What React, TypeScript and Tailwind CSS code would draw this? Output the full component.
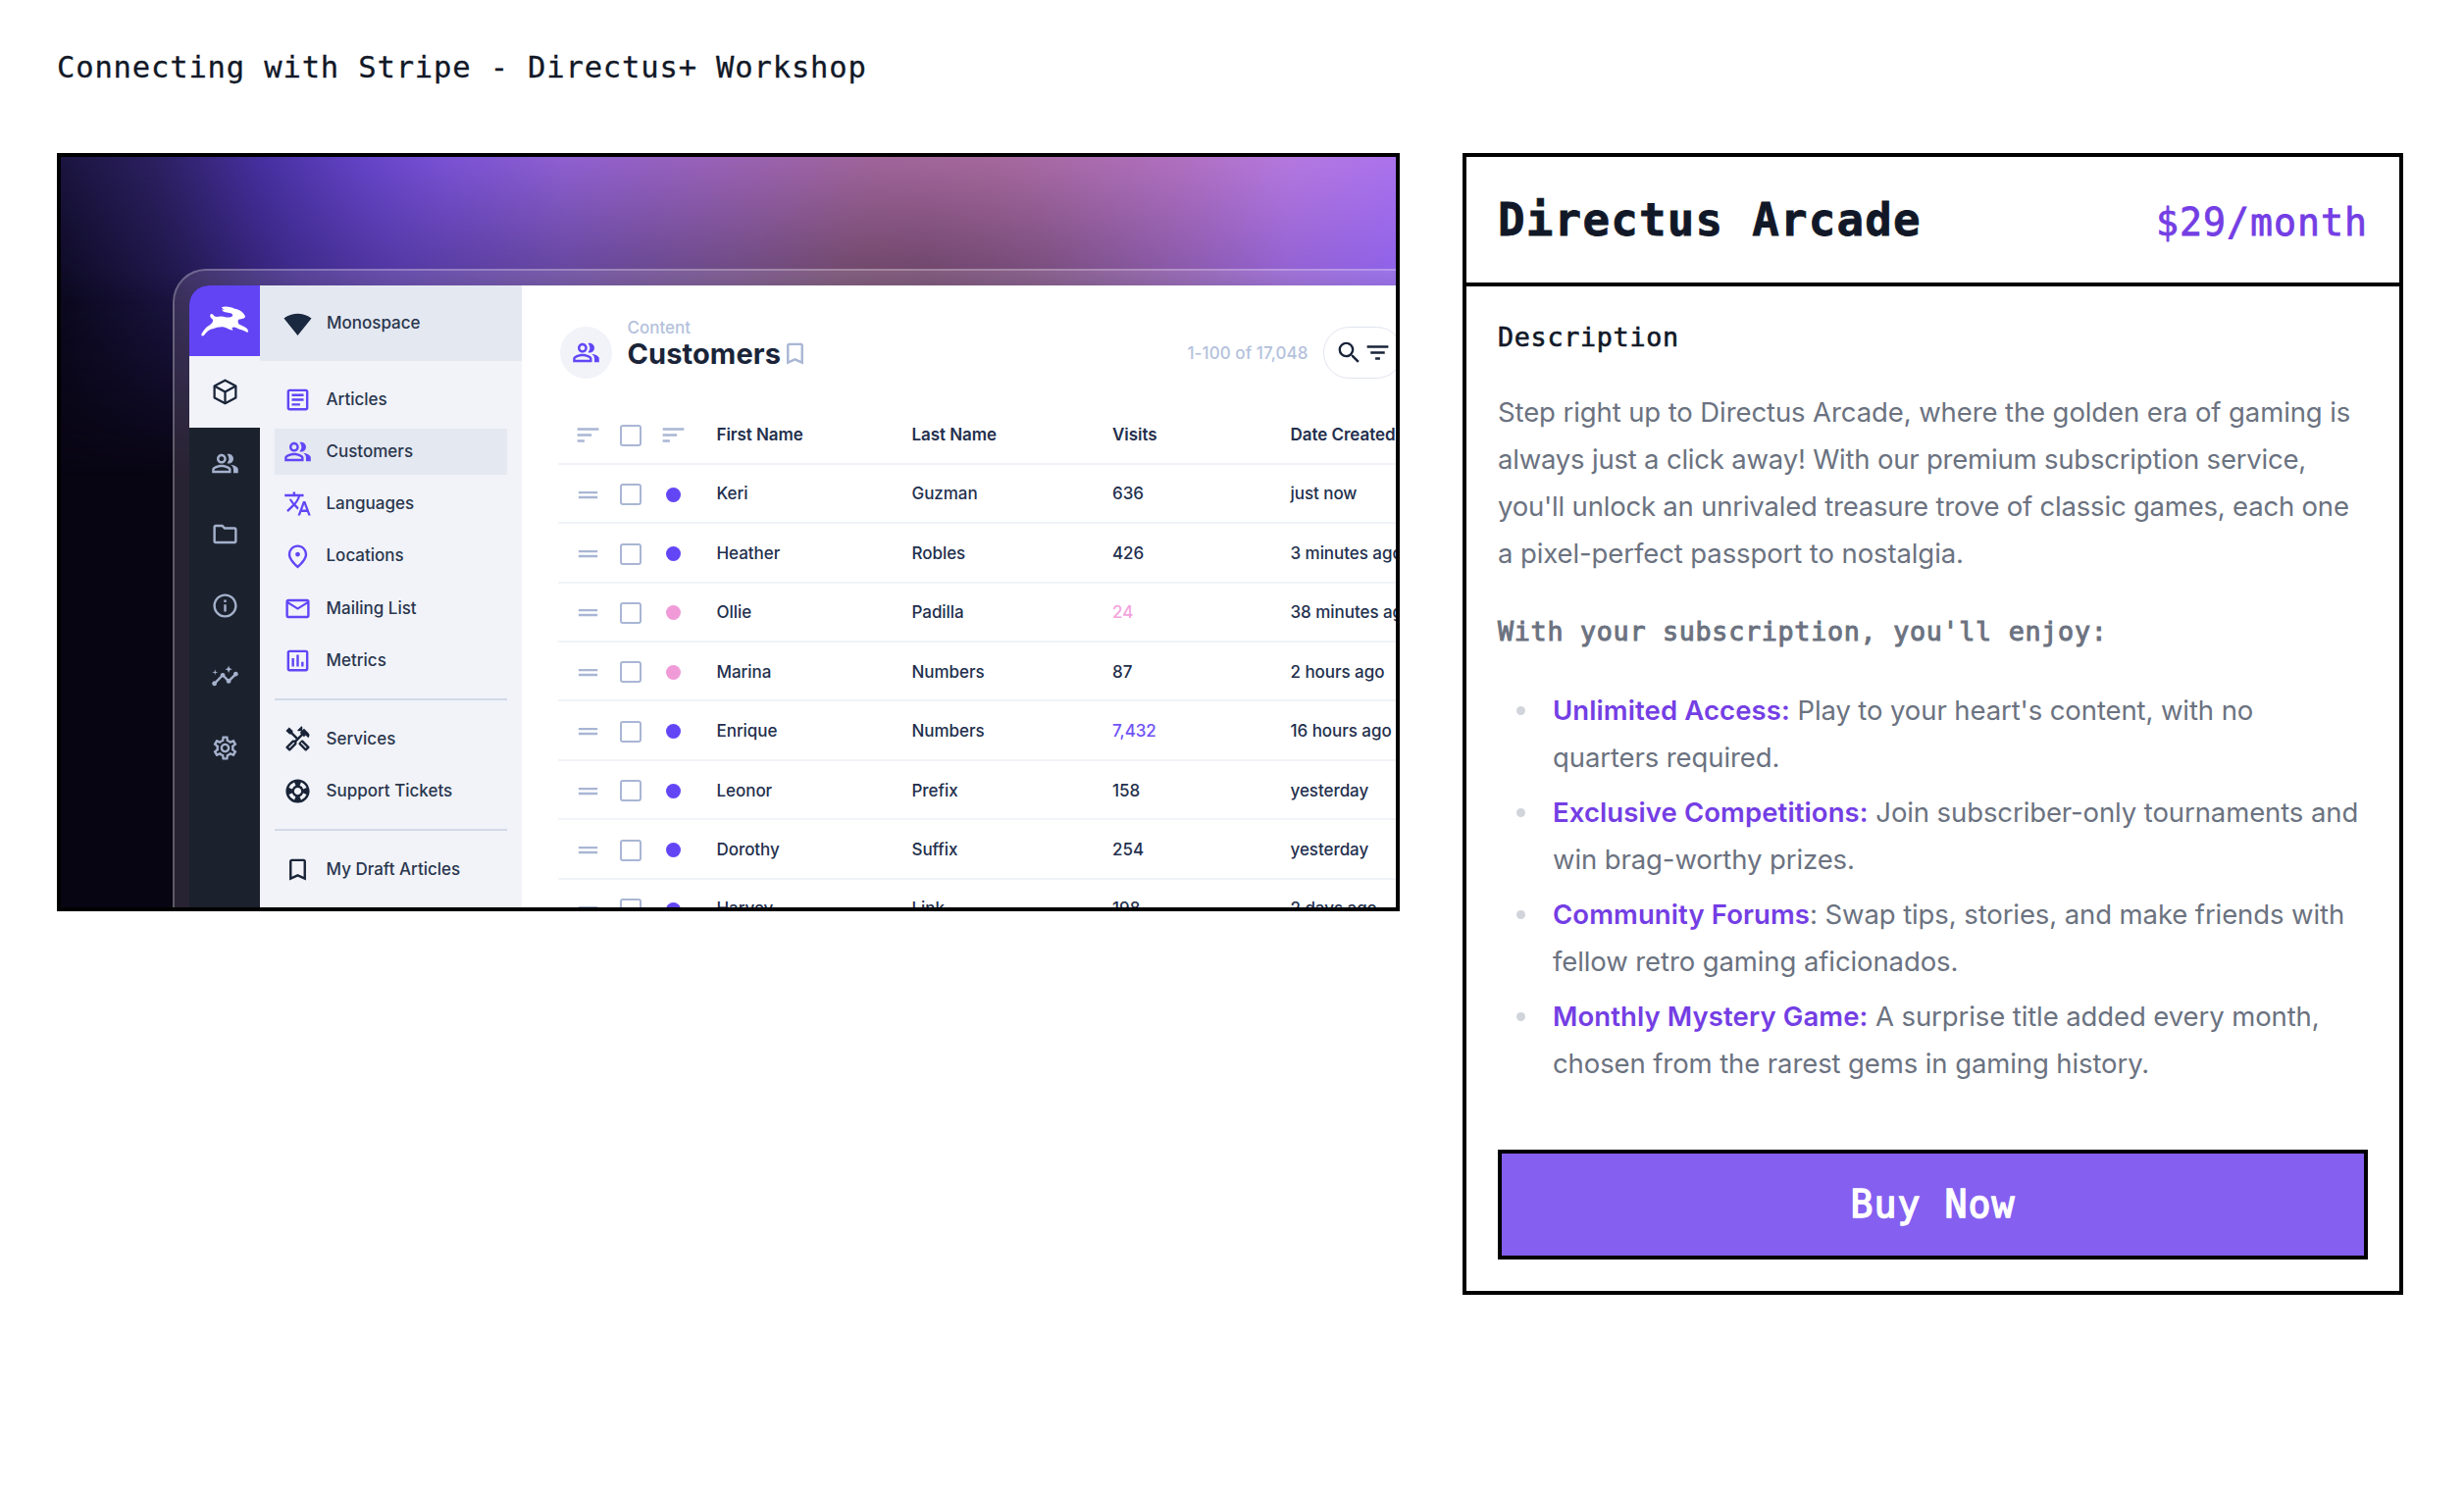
import type { ReactNode } from "react";
import type { IconType } from "react-icons";
import {
  MdBookmarkBorder,
  MdDragHandle,
  MdFilterList,
  MdInfoOutline,
  MdInsights,
  MdMailOutline,
  MdOutlineArticle,
  MdOutlineFolder,
  MdOutlineHandyman,
  MdOutlineInsertChart,
  MdOutlinePeopleAlt,
  MdOutlinePlace,
  MdOutlineSettings,
  MdOutlineSupport,
  MdSearch,
  MdSignalWifi4Bar,
  MdSort,
  MdTranslate,
} from "react-icons/md";

function RabbitLogo() {
  return (
    <svg viewBox="-6 -13.5 219 219" className="size-[73px]" fill="#fff">
      <path d="M31 136 C36 126 44 114 56 108 C64 103 67 97 66 91 C61 88 56 82 58 76 C61 71 67 73 69 79 C74 85 82 81 92 81 C104 82 116 88 125 81 C129 77 126 73 120 71 C110 69 98 70 93 60 L103 61 C98 59 94 56 93 53 C106 49 124 53 132 58 C148 60 162 70 165 82 C164 88 154 90 146 90 C142 92 142 98 145 104 C154 110 168 112 173 122 C175 128 173 132 169 129 C160 122 148 122 138 116 C132 112 127 114 124 117 L128 123 C118 124 110 116 100 114 C88 112 76 116 66 119 C54 120 46 130 40 138 C36 143 30 142 31 136 Z" />
    </svg>
  );
}

function CubeIcon() {
  return (
    <svg
      viewBox="0 0 24 24"
      className="size-[29px]"
      fill="none"
      stroke="currentColor"
      strokeWidth="1.9"
      strokeLinejoin="round"
    >
      <path d="M12 2.3 21 7v10l-9 4.7L3 17V7z" />
      <path d="m3 7 9 5 9-5M12 12v9.7" />
    </svg>
  );
}

const modules: IconType[] = [
  MdOutlinePeopleAlt,
  MdOutlineFolder,
  MdInfoOutline,
  MdInsights,
  MdOutlineSettings,
];

function ModuleBar() {
  return (
    <div className="flex w-[72px] shrink-0 flex-col bg-[#1b222d] text-[#a5b1cc]">
      <div className="h-[72.5px] bg-[#6244f5]">
        <RabbitLogo />
      </div>
      <div className="flex h-[72.5px] items-center justify-center bg-[#f1f3f9] pt-px text-[#1a2438]">
        <CubeIcon />
      </div>
      {modules.map((Icon, i) => (
        <div key={i} className="flex h-[72.5px] items-center justify-center pt-px">
          <Icon className="size-[29px]" />
        </div>
      ))}
    </div>
  );
}

function NavItem({
  icon: Icon,
  label,
  active = false,
  dark = false,
}: {
  icon: IconType;
  label: string;
  active?: boolean;
  dark?: boolean;
}) {
  return (
    <div
      className={`flex h-[47.5px] items-center gap-[15px] pl-[8.5px] ${active ? "bg-[#e4e8f1]" : ""}`}
    >
      <Icon className={`size-[29px] shrink-0 ${dark ? "text-[#1a2438]" : "text-[#6246f6]"}`} />
      <span>{label}</span>
    </div>
  );
}

function NavDivider() {
  return <div className="mt-[9px] mb-[10px] h-[2px] bg-[#d2d9e6]" />;
}

function Navigation() {
  return (
    <div className="w-[267px] shrink-0 bg-[#f1f3f9] text-[17px] font-medium text-[#2a364d]">
      <div className="flex h-[77px] items-center gap-[15px] bg-[#e4e8f1] pt-[2px] pl-[24px]">
        <MdSignalWifi4Bar className="size-[29px] text-[#1a2840]" />
        <span>Monospace</span>
      </div>
      <div className="flex flex-col gap-[5.75px] px-[15px] pt-[16px]">
        <NavItem icon={MdOutlineArticle} label="Articles" />
        <NavItem icon={MdOutlinePeopleAlt} label="Customers" active />
        <NavItem icon={MdTranslate} label="Languages" />
        <NavItem icon={MdOutlinePlace} label="Locations" />
        <NavItem icon={MdMailOutline} label="Mailing List" />
        <NavItem icon={MdOutlineInsertChart} label="Metrics" />
        <NavDivider />
        <NavItem icon={MdOutlineHandyman} label="Services" dark />
        <NavItem icon={MdOutlineSupport} label="Support Tickets" dark />
        <NavDivider />
        <NavItem icon={MdBookmarkBorder} label="My Draft Articles" dark />
      </div>
    </div>
  );
}

type Row = {
  first: string;
  last: string;
  visits: string;
  date: string;
  dot?: string;
  tone?: string;
};

const rows: Row[] = [
  { first: "Keri", last: "Guzman", visits: "636", date: "just now" },
  { first: "Heather", last: "Robles", visits: "426", date: "3 minutes ago" },
  { first: "Ollie", last: "Padilla", visits: "24", date: "38 minutes ago", dot: "bg-[#f09bd8]", tone: "text-[#f3a3dc]" },
  { first: "Marina", last: "Numbers", visits: "87", date: "2 hours ago", dot: "bg-[#f09bd8]" },
  { first: "Enrique", last: "Numbers", visits: "7,432", date: "16 hours ago", tone: "text-[#6f52f6]" },
  { first: "Leonor", last: "Prefix", visits: "158", date: "yesterday" },
  { first: "Dorothy", last: "Suffix", visits: "254", date: "yesterday" },
  { first: "Harvey", last: "Link", visits: "198", date: "2 days ago" },
];

function TableRow({ children, header = false }: { children: ReactNode; header?: boolean }) {
  return (
    <div
      className={`grid h-[60.45px] grid-cols-[43.5px_43.5px_58.5px_199px_204.5px_181.5px_160px] items-center border-b-2 border-[#f0f3f8] pt-[2.5px] pl-[16px] whitespace-nowrap ${header ? "font-semibold" : "font-medium"}`}
    >
      {children}
    </div>
  );
}

function Checkbox() {
  return <span className="ml-[3.5px] size-[22px] rounded-[3px] border-[2.5px] border-[#a9b6d4]" />;
}

function CustomersTable() {
  return (
    <div className="mt-[27.2px] ml-[-2px] text-[17px] tracking-[-0.05px] text-[#232f4d]">
      <TableRow header>
        <MdSort className="size-[29px] text-[#a9b6d4]" />
        <Checkbox />
        <MdSort className="size-[29px] text-[#a9b6d4]" />
        <span>First Name</span>
        <span>Last Name</span>
        <span>Visits</span>
        <span>Date Created</span>
      </TableRow>
      {rows.map((r) => (
        <TableRow key={r.first}>
          <MdDragHandle className="size-[29px] text-[#a9b6d4]" />
          <Checkbox />
          <span className={`ml-[7px] size-[15px] rounded-full ${r.dot ?? "bg-[#6246f6]"}`} />
          <span>{r.first}</span>
          <span>{r.last}</span>
          <span className={r.tone ?? ""}>{r.visits}</span>
          <span>{r.date}</span>
        </TableRow>
      ))}
    </div>
  );
}

function CustomersPanel() {
  return (
    <div className="w-[898px] shrink-0 bg-white pt-[42.5px] pl-[39px]">
      <div className="flex h-[53px]">
        <div className="flex size-[53px] items-center justify-center rounded-full bg-[#f1f3f9]">
          <MdOutlinePeopleAlt className="size-[29px] text-[#6246f6]" />
        </div>
        <div className="mt-[-10px] ml-[15.5px]">
          <div className="text-[17px] leading-[22px] font-medium text-[#b4c1dc]">Content</div>
          <div className="flex items-center text-[29px] leading-[31px] font-bold tracking-[0.1px] text-[#1a2438]">
            Customers
            <MdBookmarkBorder className="size-[29px] text-[#a9b6d4]" />
          </div>
        </div>
        <div className="mt-[1px] ml-auto flex h-[53px] items-center text-[17px] font-medium tracking-[0.08px] text-[#b4c1dc]">
          1-100 of 17,048
        </div>
        <div className="ml-[15.5px] flex h-[53px] w-[81px] items-center rounded-full border-[1.5px] border-[#e0e4ee] pl-[10.5px] text-[#1a2438]">
          <MdSearch className="size-[29px]" />
          <MdFilterList className="size-[29px]" />
        </div>
      </div>
      <CustomersTable />
    </div>
  );
}

function ProductImage() {
  return (
    <div className="relative isolate h-[773px] w-[1369px] shrink-0 overflow-hidden border-4 border-black bg-[#080513] font-['Inter',sans-serif]">
      <div className="absolute inset-x-0 top-0 -z-10 h-[360px] bg-[linear-gradient(90deg,#0c0920_0%,#1f174a_9%,#3a2782_17.5%,#4c3498_25%,#5a4092_37%,#634578_50%,#65425f_59%,#623e60_65%,#6d4775_74%,#8054a6_84%,#8a5cd0_92%,#875ee8_100%)] [mask-image:linear-gradient(180deg,#000_32%,transparent_90%)]" />
      <div className="absolute inset-x-0 top-0 -z-10 h-[150px] bg-[linear-gradient(90deg,#1b1540_0%,#2c2060_7%,#4630a0_15%,#6645c8_23%,#7a52d4_29%,#8f60d0_38%,#9a62b5_50%,#a0659a_61%,#a5689c_70%,#b070c0_84%,#b478de_92%,#ab72ec_100%)] [mask-image:linear-gradient(180deg,#000,transparent)]" />
      <div className="mt-[114px] ml-[114px] h-[800px] w-[1400px] rounded-tl-[34px] border-2 border-white/25 bg-[#f0dcf0]/14 pt-[14.5px] pl-[15px]">
        <div className="flex h-full w-[1237px] overflow-hidden rounded-tl-[20px]">
          <ModuleBar />
          <Navigation />
          <CustomersPanel />
        </div>
      </div>
    </div>
  );
}

function Perk({ title, children }: { title: ReactNode; children: ReactNode }) {
  return (
    <li className="flex">
      <span className="mt-[20px] ml-[19px] size-[9px] shrink-0 rounded-full bg-[#d1d5db]" />
      <p className="ml-[28px] whitespace-nowrap">
        <strong className="font-semibold tracking-[0.1px] text-[#743ee4]">{title}</strong>
        {children}
      </p>
    </li>
  );
}

function ProductCard() {
  return (
    <div className="w-[959px] shrink-0 border-4 border-black font-['DejaVu_Sans_Mono',monospace]">
      <div className="flex h-[132px] items-baseline justify-between border-b-4 border-black px-8 pt-8">
        <h2 className="text-[45.8px] leading-[64px] font-bold tracking-[1.22px] text-[#111827] [-webkit-text-stroke:0.8px]">
          Directus Arcade
        </h2>
        <p className="text-[38.2px] leading-[64px] tracking-[1px] text-[#743ee4] [-webkit-text-stroke:0.8px]">
          $29/month
        </p>
      </div>
      <div className="p-8">
        <h3 className="text-[26.7px] leading-10 tracking-[0.73px] text-[#111827] [-webkit-text-stroke:0.6px]">
          Description
        </h3>
        <div className="font-['Inter',sans-serif] text-[27.5px] leading-[48px] tracking-[-0.1px] text-[#6b7280]">
          <p className="mt-8 whitespace-nowrap">
            Step right up to Directus Arcade, where the golden era of gaming is
            <br />
            <span className="tracking-[-0.2px]">
              always just a click away! With our premium subscription service,
              <br />
              you'll unlock an unrivaled treasure trove of classic games, each one
            </span>
            <br />a pixel-perfect passport to nostalgia.
          </p>
          <h4 className="mt-9 font-['DejaVu_Sans_Mono',monospace] text-[26.7px] leading-10 tracking-[0.73px] [-webkit-text-stroke:1px]">
            With your subscription, you'll enjoy:
          </h4>
          <ul className="mt-9 flex flex-col gap-2">
            <Perk title="Unlimited Access:">
              {" "}Play to your heart's content, with no
              <br />
              quarters required.
            </Perk>
            <Perk title="Exclusive Competitions:">
              {" "}Join subscriber-only tournaments and
              <br />
              win brag-worthy prizes.
            </Perk>
            <Perk title="Community Forums">
              : Swap tips, stories, and make friends with
              <br />
              fellow retro gaming aficionados.
            </Perk>
            <Perk title="Monthly Mystery Game:">
              {" "}A surprise title added every month,
              <br />
              chosen from the rarest gems in gaming history.
            </Perk>
          </ul>
        </div>
        <button className="mt-16 flex h-[112px] w-full items-center justify-center border-4 border-black bg-[#855ff0] text-[38.2px] leading-[56px] tracking-[1px] text-white [-webkit-text-stroke:1.4px]">
          Buy Now
        </button>
      </div>
    </div>
  );
}

export default function App() {
  return (
    <div className="min-h-[1520px] bg-white px-[58px] pt-[49px]">
      <h1 className="font-['DejaVu_Sans_Mono',monospace] text-[30.5px] leading-10 tracking-[0.84px] text-[#111827] [-webkit-text-stroke:0.3px]">
        Connecting with Stripe - Directus+ Workshop
      </h1>
      <div className="mt-[67px] flex items-start gap-16">
        <ProductImage />
        <ProductCard />
      </div>
    </div>
  );
}
